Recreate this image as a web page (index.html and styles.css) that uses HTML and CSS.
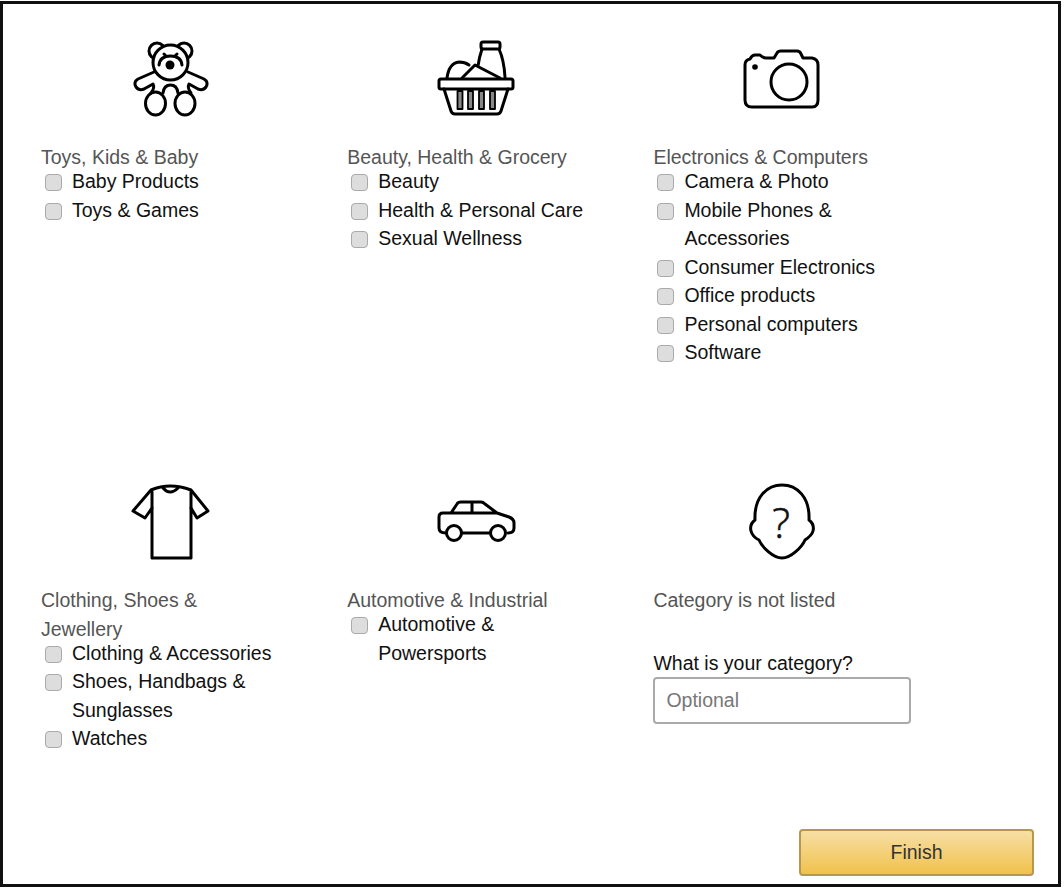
FILE: index.html
```html
<!DOCTYPE html>
<html lang="en">
<head>
    <meta charset="UTF-8">
    <title>Select categories</title>
    <link rel="stylesheet" href="styles.css">
</head>
<body>
    <div class="frame">
        <div class="categories">
            <div class="category">
                <svg class="icon" viewBox="1 0 100 100">
                    <circle cx="37" cy="21" r="8"/>
                    <circle cx="64" cy="21" r="8"/>
                    <circle class="fill" cx="50.5" cy="32.5" r="17.5"/>
                    <path d="M39 35 Q40 26 50.5 26 Q61 26 62 35"/>
                    <circle class="solid" cx="50" cy="35" r="4.5"/>
                    <path d="M44 24 L46 26 M57 24 L55 26"/>
                    <path d="M34 42 L18 49 Q13 52 16 57 Q19 61 24 59 L33 54 Q35 58 31 63 M68 42 L84 49 Q89 52 86 57 Q83 61 78 59 L69 54 Q67 58 71 63"/>
                    <path d="M43 63 Q44 55 50.5 55 Q57 55 58 63"/>
                    <ellipse cx="35.5" cy="73.5" rx="10" ry="11.5"/>
                    <ellipse cx="65" cy="73.5" rx="10" ry="11.5"/>
                </svg>
                <h3 class="category-title">Toys, Kids &amp; Baby</h3>
                <label class="option"><input type="checkbox"><span>Baby Products</span></label>
                <label class="option"><input type="checkbox"><span>Toys &amp; Games</span></label>
            </div>

            <div class="category">
                <svg class="icon" viewBox="2 0 100 100">
                    <path d="M22 48 Q24 33 34 32 Q40 32 44 35 M37 48 L50 35 L75 48 M53 36 Q54 28 57 19 M74 19 Q79 30 80 47"/>
                    <rect x="56" y="12" width="19" height="7" rx="2"/>
                    <rect x="14" y="49" width="74" height="10" rx="2"/>
                    <path d="M19 59 L26 81 Q27 84 30 84 L72 84 Q75 84 76 81 L83 59"/>
                    <rect class="slat" x="32.5" y="61" width="5" height="18"/>
                    <rect class="slat" x="43" y="61" width="5" height="18"/>
                    <rect class="slat" x="54" y="61" width="5" height="18"/>
                    <rect class="slat" x="65" y="61" width="5" height="18"/>
                </svg>
                <h3 class="category-title">Beauty, Health &amp; Grocery</h3>
                <label class="option"><input type="checkbox"><span>Beauty</span></label>
                <label class="option"><input type="checkbox"><span>Health &amp; Personal Care</span></label>
                <label class="option"><input type="checkbox"><span>Sexual Wellness</span></label>
            </div>

            <div class="category">
                <svg class="icon" viewBox="-1 0 100 100">
                    <path d="M11 35 Q11 30 16 29 Q18 25 21 25 L26 25 Q29 28 32 28 L40 28 L43 23 Q44 21 47 21 L63 21 Q66 21 67 24 L69 28 L78 28 Q84 29 84 35 L84 70 Q84 77 78 77 L18 77 Q11 77 11 70 Z"/>
                    <circle cx="55" cy="52" r="18"/>
                    <circle class="solid" cx="21" cy="37" r="2.8"/>
                </svg>
                <h3 class="category-title">Electronics &amp; Computers</h3>
                <label class="option"><input type="checkbox"><span>Camera &amp; Photo</span></label>
                <label class="option"><input type="checkbox"><span>Mobile Phones &amp; Accessories</span></label>
                <label class="option"><input type="checkbox"><span>Consumer Electronics</span></label>
                <label class="option"><input type="checkbox"><span>Office products</span></label>
                <label class="option"><input type="checkbox"><span>Personal computers</span></label>
                <label class="option"><input type="checkbox"><span>Software</span></label>
            </div>

            <div class="category">
                <svg class="icon" viewBox="1 -2 100 100">
                    <path d="M31 15 Q50 7 71 15 L88 36 L77 43 L71 33 L71 83 L32 83 L32 33 L25 43 L13 36 Z"/>
                    <path d="M43 13 Q50 21 58 13 M32 17 L32 33 M71 17 L71 33"/>
                </svg>
                <h3 class="category-title">Clothing, Shoes &amp; Jewellery</h3>
                <label class="option"><input type="checkbox"><span>Clothing &amp; Accessories</span></label>
                <label class="option"><input type="checkbox"><span>Shoes, Handbags &amp; Sunglasses</span></label>
                <label class="option"><input type="checkbox"><span>Watches</span></label>
            </div>

            <div class="category">
                <svg class="icon" viewBox="2 -17 100 100">
                    <path d="M21 43 Q14 43 14 38 L14 27 Q14 23 18 23 L26 23 L32 14 Q33 12 36 12 L56 12 Q58 12 60 14 L72 23 L84 27 Q89 29 89 33 L89 38 Q89 43 83 43 M37 43 L65 43 M26 23 L72 23 M47 12 L47 23"/>
                    <circle cx="29" cy="43" r="7.5"/>
                    <circle cx="73" cy="43" r="7.5"/>
                </svg>
                <h3 class="category-title">Automotive &amp; Industrial</h3>
                <label class="option"><input type="checkbox"><span>Automotive &amp; Powersports</span></label>
            </div>

            <div class="category">
                <svg class="icon" viewBox="-6 -2 100 100">
                    <path d="M16 45 C15 22 28 10 43 10 C58 10 71 22 70 45 C74 48 75 52 74 56 C73 60 69 63 66 65 C63 72 52 83 43 83 C34 83 23 72 20 65 C16 63 13 60 12 56 C11 52 12 48 16 45 Z"/>
                    <text class="icon-mark" x="42" y="63" text-anchor="middle">?</text>
                </svg>
                <h3 class="category-title">Category is not listed</h3>
                <label class="other-label" for="other">What is your category?</label>
                <input class="other-input" id="other" type="text" placeholder="Optional">
            </div>
        </div>

        <div class="footer">
            <button class="finish">Finish</button>
        </div>
    </div>
</body>
</html>
```

FILE: styles.css
```css
* {
    box-sizing: border-box;
}

body {
    margin: 0;
    background: #fff;
    color: #111;
    font-family: "Liberation Sans", Arial, sans-serif;
    font-size: 19.5px;
    line-height: 28.5px;
}

.frame {
    width: 1061px;
    height: 886px;
    margin-top: 1px;
    border: 3px solid #111;
    padding: 26px 24px 0 38px;
}

.categories {
    display: grid;
    grid-template-columns: repeat(3, 306.2px);
    grid-auto-rows: 443px;
}

.category {
    width: 238px;
}

.icon {
    display: block;
    width: 100px;
    height: 100px;
    margin-left: 80px;
    fill: none;
    stroke: #000;
    stroke-width: 3;
    stroke-linejoin: round;
    stroke-linecap: round;
}

.icon .fill {
    fill: #fff;
}

.icon .solid {
    fill: #000;
    stroke: none;
}

.icon .slat {
    fill: #888;
    stroke-width: 1.8;
}

.icon-mark {
    fill: #111;
    stroke: #111;
    stroke-width: 0.6;
    font-family: "Open Sans", sans-serif;
    font-weight: 300;
    font-size: 42px;
}

.category-title {
    margin: 13px 0 -4.5px;
    font-size: inherit;
    font-weight: normal;
    color: #555;
}

.option {
    display: flex;
    align-items: flex-start;
}

.option input {
    appearance: none;
    flex: none;
    width: 17px;
    height: 17px;
    margin: 7px 10px 0 4px;
    background: #ddd;
    border: 1px solid #aaa;
    border-radius: 4px;
}

.other-label {
    display: block;
    margin-top: 39px;
}

.other-input {
    display: block;
    width: 258px;
    height: 47px;
    margin-top: -1px;
    padding: 0 11px;
    border: 2px solid #aaa;
    border-radius: 4px;
    font: inherit;
    color: #111;
}

.other-input::placeholder {
    color: #777;
}

.footer {
    display: flex;
    justify-content: flex-end;
    margin-top: -87px;
}

.finish {
    width: 235px;
    height: 47px;
    border: 2px solid #b6974d;
    border-radius: 4px;
    background: linear-gradient(to bottom, #f7dfa5, #f0c14b);
    color: #333;
    font: inherit;
}
```
